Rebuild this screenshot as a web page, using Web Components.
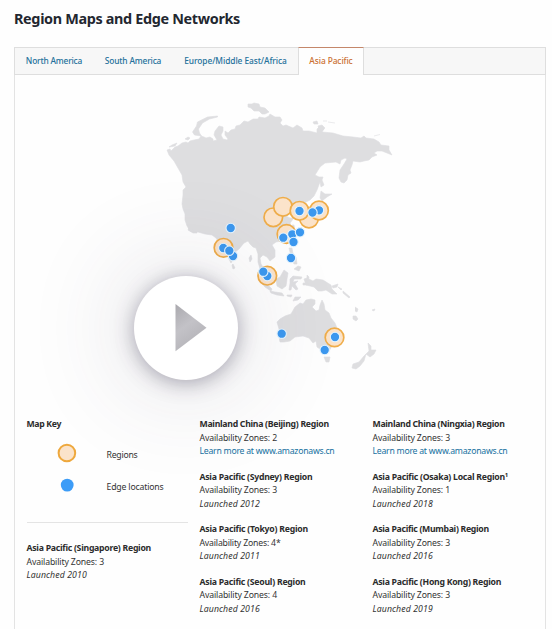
<!DOCTYPE html>
<html lang="en"><head><meta charset="utf-8"><title>Region Maps and Edge Networks</title>
<style>html,body{margin:0;background:#fefefe;overflow:hidden}body{height:629px;font-family:"Noto Sans","Open Sans",sans-serif;color:#333}</style></head>
<body><region-page></region-page>
<script>
const define=(name,html,setup)=>customElements.define(name,class extends HTMLElement{
  connectedCallback(){
    if(this.shadowRoot)return;
    this.attachShadow({mode:'open'}).innerHTML=typeof html==='function'?html(this):html;
    if(setup)setup(this);
  }
});
// A single line of text, tracked to occupy the width given in "w".
define('fit-text',`<style>:host{display:block;white-space:nowrap;font-kerning:normal}span{display:inline-block}</style><span><slot></slot></span>`,el=>{
  const s=el.shadowRoot.querySelector('span'),w=+el.getAttribute('w');
  if(w)s.style.letterSpacing=((w-s.getBoundingClientRect().width)/el.textContent.length)+'px';
});
define('tab-item',el=>`<style>:host{display:flex;box-sizing:border-box;height:28px;align-items:center;justify-content:center;font-size:8.4px;font-weight:500;color:#24719b;padding-bottom:1px}
:host([active]){background:#fefefe;border:1px solid #dedede;border-top-color:#c4876a;border-bottom:0;color:#cb7133;padding-bottom:2px}</style><fit-text w="${el.getAttribute('w')}">${el.getAttribute('label')}</fit-text>`);
define('tab-bar',`<style>:host{display:grid;box-sizing:border-box;height:28px;grid-template-columns:78px 80px 125px 66px;border:1px solid #dedede;border-bottom:0;background:#f7f7f7;box-shadow:inset 0 -1px #dedede}tab-item{margin-top:-1px}</style>
<tab-item label="North America" w="56.3"></tab-item><tab-item label="South America" w="56.5"></tab-item><tab-item label="Europe/Middle East/Africa" w="102.5"></tab-item><tab-item active label="Asia Pacific" w="43.3"></tab-item>`);
define('region-info',el=>{const a=n=>el.getAttribute(n);
return `<style>:host{display:block;font-size:8.7px;line-height:13.4px;height:52.6px;color:#333}.t{font-weight:700;color:#2c2c2c}.l{color:#1670a0}.i{font-style:italic}sup{font-size:6px;line-height:0;vertical-align:3px}</style>
<fit-text class="t" w="${a('w')}">${a('name')}${a('note')?`<sup>${a('note')}</sup>`:''}</fit-text>
<fit-text w="${a('zones').length>1?81:77.5}">Availability Zones: ${a('zones')}</fit-text>
${a('year')?`<fit-text class="i" w="60.3">Launched ${a('year')}</fit-text>`:`<fit-text class="l" w="135">Learn more at www.amazonaws.cn</fit-text>`}`});
define('play-button',`<style>:host{display:block;width:104px;height:104px;border-radius:50%;background:#fff;box-shadow:0 3px 20px rgba(65,60,85,.43),0 0 100px 12px rgba(65,60,85,.15)}svg{display:block}</style>
<svg width="104" height="104"><defs><linearGradient id="g" x1="0" y1="0" x2=".5" y2="1"><stop stop-color="#aaa9ae"/><stop offset=".5" stop-color="#c3c2c7"/><stop offset="1" stop-color="#b3b2b7"/></linearGradient></defs><path d="M41.5 28L72.5 51.8L41.5 75.3Z" fill="url(#g)"/></svg>`);
const regions=[[273.3,217.3],[283,206.8],[286.5,234],[309,218.5],[299.5,210.8],[319,210.5],[267.3,275.7],[223.5,247.8],[334.5,337.4]];
const edges=[[230.7,228],[223.3,248],[233,256],[229.3,250.7],[299.5,211],[319,210.3],[312.5,212.5],[292.3,234.3],[283.3,237.7],[300,232.3],[293.5,242],[291,258],[267.3,276],[263.3,271.7],[281.7,333.7],[335,337],[324.7,350]];
define('region-map',`<style>:host{display:block;position:relative;height:340px}svg{display:block;width:100%;height:340px}play-button{position:absolute;left:118.5px;top:201px}</style>
<svg viewBox="15 75 530 340"><g fill="#dedee0" stroke="#dedee0" stroke-width=".6" stroke-linejoin="round">
<path d="M167 150L170 149 171 151 175 147 178 146 182 143 186 142 188 143 190 141 194 140 199 139 201 136 204 137 206 138 210 137 213 139 213 141 217 140 214 135 215 131 219 126 223 127 223 131 221 135 223 139 227 140 228 139 225 135 225 131 228 133 231 130 235 129 236 126 240 125 244 121 248 122 253 119 258 119 259 117 265 118 269 116 270 114 275 117 280 117 282 120 280 123 283 126 286 125 293 128 297 125 302 128 303 131 309 131 317 133 317 129 320 126 324 129 322 132 333 133 343 136 353 137 361 138 364 136 366 138 374 139 379 142 381 145 389 146 389 150 392 155 387 153 382 151 377 151 374 153 377 155 372 157 369 160 364 161 360 162 353 161 352 165 350 170 351 173 348 175 347 180 344 183 341 182 339 178 340 170 344 164 347 159 345 158 341 160 340 164 336 162 325 163 320 167 315 175 319 177 323 177 322 180 324 185 321 187 320 182 317 190 314 196 310 200 306 202 303 206 305 211 308 217 305 222 301 218 298 211 295 210 290 213 286 216 290 218 294 218 290 223 292 228 292 233 288 238 282 241 276 242 272 245 275 250 275 257 270 261 267 257 263 255 260 258 261 264 265 270 264 274 260 269 258 262 258 254 256 248 253 247 250 244 248 241 244 243 239 249 234 253 233 259 231 263 228 257 225 250 223 244 219 243 216 238 212 235 205 234 198 232 194 231 190 231 187 226 185 220 185 214 183 209 182 204 183 195 183 190 186 187 183 182 182 175 178 168 174 161 169 155Z"/>
<path d="M217.5 116l-10 1-10 5-1 4-4 6 2 3 7 1-2-3-1-4 4-6 7-4 8-2zM185 139l3-2 2 1-2 2zM169 147l3-2 5-2-2 3zM248 104l4 0 2-1 5 1 1 3 5 1 4 4-4 2-3 0-3-3-5 0-3-3-3-1zM313 122l4-1 1 3-4 0zM318 126l4-1 3 3-2 2-4-1zM323 121l4 0M328 122l7 1M374 136l6-1.5M189 228l5 3 3 0 0 2-4 0-5-3zM233 264l2 4-2 1-1-4zM251 255l1 4-2 3-1-4z"/>
<path d="M258 276l4 3 5 5 5 5-1 2-6-4-5-6zM276 279l4-2 4-7 4 3-1 6-1 7-4 3-5-3zM270 291l5 1 7 1 2 3-7-1-6-2zM287 295h5l-1 2-4-1zM295 297l6 0-3 3-5 1zM290 279l3-3 9 1-1 2-7 0-1 3 5-1-3 3 3 5-2 1-4-4-1 4-2 0 1-7zM307 275l2 2-1 5-1-3zM303 283l4 0 0 2-4 0zM289 248l3 0 1 6-2 2zM292 260l4-3 1 7-3 0zM294 269l4-3 3 1-2 4zM304 279l3-1 6 3 3-2 7 1 8 5 1 4 5 5-5 0-6-4-4 1-4 0-4-4-8-2zM332 286l6-2-1 3-4 1zM338 287l4 2-1 1zM343 291l7 6-1 1-6-5zM292 225l2 0 1 5zM266 244l4-1 1 3-3 2z"/>
<path d="M321 191l4 3 7 0-5 3-5 4-2-3zM317 201l4 2-3 8-7 3-4 4-2-1 5-6 7-3z"/>
<path d="M280 319l5-3 6-2 4-7 5-4 3 1 3-4 5-1 4 1 0 4-3 3 4 4 3-1 1-5 2-5 2 4 1 6 4 3 2 5 4 5 2 5 0 7-1 5-4 6-3 5-5 1-4-3-3-2-1-6-3 2-4-5-6-2-8 1-5 4-6 1-4 0-1-5 0-8-2-7zM324 357l6 0-1 5-3 0zM368 343l3 3 0 4 5 0-2 4-4 3-4-3 3-3zM366 354l-2 7-4 5-4 3-4-1 1-4 6-2 5-6zM355 307l3 2-1 3-2-1M353 316l3 0 2 3-2 2-3-2zM372 310l3-1-1 2z"/></g>
<g id="r" fill="#fbe3ca" stroke="#efad4a" stroke-width="1.7"></g><g id="e" fill="#3c98ef" stroke="#e6f5ff" stroke-width="1.1"></g></svg><play-button></play-button>`,el=>{
 const dots=(id,pts,r)=>el.shadowRoot.getElementById(id).innerHTML=pts.map(([x,y])=>`<circle cx="${x}" cy="${y}" r="${r}"/>`).join('');
 dots('r',regions,9.3);dots('e',edges,4.7);
});
define('map-key',`<style>:host{display:block;height:124px;font-size:8.7px;line-height:13.4px}.h{font-weight:700;color:#2c2c2c}.row{display:grid;grid-template-columns:80px 1fr;height:32px;align-items:center}.row:first-of-type{margin-top:5px}svg{display:block;margin-left:29px}.row fit-text{padding-top:7px}hr{border:0;border-top:1px solid #e4e4e4;margin:21px 0 0;width:161px}</style>
<fit-text class="h" w="34.5">Map Key</fit-text>
<div class="row"><svg width="22" height="22"><circle cx="10.9" cy="11" r="8.3" fill="#fbe3ca" stroke="#eea83d" stroke-width="2"/></svg><fit-text w="31">Regions</fit-text></div>
<div class="row"><svg width="22" height="22"><circle cx="11.2" cy="11.1" r="6.4" fill="#3c9cf7"/></svg><fit-text w="57">Edge locations</fit-text></div><hr>`);
define('region-page',`<style>:host{display:flex;flex-direction:column;box-sizing:border-box;height:629px;overflow:hidden;padding:10px 6px 0 14px}h1{font-size:14.4px;line-height:18px;margin:0 0 19px;color:#232730}tab-bar{flex:none}.panel{flex:1;min-height:0;box-sizing:border-box;border:1px solid #e3e3e3;border-top:0;border-bottom:0}
.cols{position:relative;display:grid;grid-template-columns:173px 173px 1fr;padding:3.1px 0 0 11.5px;height:210px;box-sizing:border-box}</style>
<h1><fit-text w="226">Region Maps and Edge Networks</fit-text></h1><tab-bar></tab-bar><div class="panel"><region-map></region-map><div class="cols">
<div><map-key></map-key><region-info name="Asia Pacific (Singapore) Region" zones="3" year="2010" w="124.5"></region-info></div>
<div><region-info name="Mainland China (Beijing) Region" zones="2" w="129.3"></region-info><region-info name="Asia Pacific (Sydney) Region" zones="3" year="2012" w="112.8"></region-info><region-info name="Asia Pacific (Tokyo) Region" zones="4*" year="2011" w="108.5"></region-info><region-info name="Asia Pacific (Seoul) Region" zones="4" year="2016" w="106"></region-info></div>
<div><region-info name="Mainland China (Ningxia) Region" zones="3" w="132"></region-info><region-info name="Asia Pacific (Osaka) Local Region" note="1" zones="1" year="2018" w="135.5"></region-info><region-info name="Asia Pacific (Mumbai) Region" zones="3" year="2016" w="116.3"></region-info><region-info name="Asia Pacific (Hong Kong) Region" zones="3" year="2019" w="128.5"></region-info></div>
</div></div>`);
</script></body></html>
